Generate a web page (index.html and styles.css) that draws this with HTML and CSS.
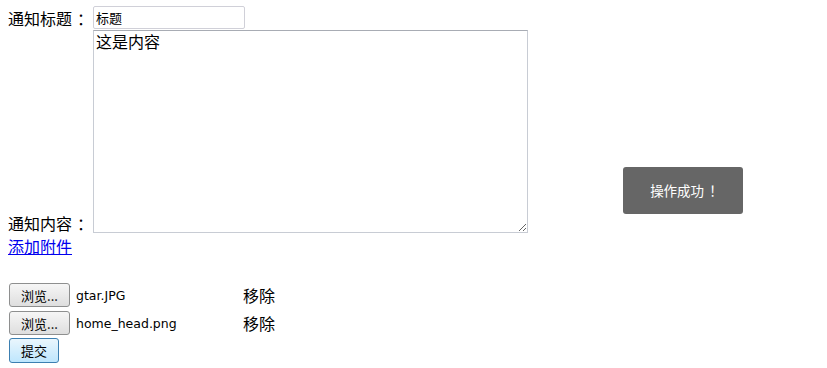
FILE: index.html
```html
<!DOCTYPE html>
<html lang="zh-CN">
<head>
    <meta charset="UTF-8">
    <title>发布通知</title>
    <link rel="stylesheet" href="styles.css">
</head>
<body>
    <form class="notice">
        <div class="row">
            <span class="label">通知标题<span class="colon">：</span></span>
            <input class="title-input" type="text" value="标题">
        </div>
        <div class="row row-content">
            <span class="label">通知内容<span class="colon">：</span></span>
            <textarea class="content-input">这是内容</textarea>
        </div>
        <a class="add-file" href="#">添加附件</a>
        <div class="files">
            <div class="file">
                <button type="button" class="btn">浏览...</button>
                <span class="file-name">gtar.JPG</span>
                <span class="remove">移除</span>
            </div>
            <div class="file">
                <button type="button" class="btn">浏览...</button>
                <span class="file-name">home_head.png</span>
                <span class="remove">移除</span>
            </div>
        </div>
        <button type="button" class="btn submit">提交</button>
    </form>

    <div class="toast">操作成功<span class="colon">！</span></div>
</body>
</html>
```

FILE: styles.css
```css
body{
    margin: 6px 8px;
    font-family: "Noto Sans CJK SC", sans-serif;
    font-size: 16px;
    color: #000;
}
.colon{
    font-feature-settings: "halt";
    padding-left: 5px;
}
.row{
    display: flex;
    align-items: center;
}
.label{
    width: 85px;
    line-height: 20px;
    white-space: nowrap;
}
.title-input{
    box-sizing: border-box;
    width: 152px;
    height: 23px;
    margin: 0;
    padding: 1px 2px;
    border: 1px solid #d0d0d8;
    border-radius: 2px;
    font-family: "Noto Sans CJK SC", sans-serif;
    font-size: 13px;
}
.row-content{
    align-items: flex-end;
    margin-top: 1px;
}
.row-content .label{
    line-height: 18px;
    margin-bottom: 1px;
}
.content-input{
    box-sizing: border-box;
    width: 435px;
    height: 203px;
    margin: 0;
    padding: 0 2px;
    border: 1px solid #c8ccd4;
    border-top-color: #a8acb4;
    font-family: "Noto Sans CJK SC", sans-serif;
    font-size: 16px;
    line-height: 20px;
    resize: both;
}
.add-file{
    display: block;
    width: 68px;
    margin-top: 2px;
    line-height: 22px;
    color: #0000ee;
}
.files{
    margin-top: 24px;
}
.file{
    display: flex;
    align-items: center;
    height: 28px;
}
.btn{
    box-sizing: border-box;
    height: 24px;
    margin: 0 0 0 1px;
    padding: 0 8px;
    border: 1px solid #8e8f8f;
    border-radius: 3px;
    background: linear-gradient(#f6f6f6, #dedede);
    font-family: "Noto Sans CJK SC", sans-serif;
    font-size: 13px;
    color: #000;
}
.file .btn{
    width: 61px;
}
.file-name{
    width: 167px;
    margin-left: 6px;
    font-family: "DejaVu Sans", sans-serif;
    font-size: 12.5px;
}
.remove{
    font-size: 16px;
}
.submit{
    width: 50px;
    height: 25px;
    margin-top: 1px;
    border-color: #3c7fb1;
    background: linear-gradient(#eaf6fd, #bee6fd);
}
.toast{
    position: absolute;
    left: 623px;
    top: 167px;
    width: 120px;
    height: 47px;
    line-height: 47px;
    text-align: center;
    background: #666;
    color: #fff;
    font-size: 13.5px;
    border-radius: 3px;
}
```
